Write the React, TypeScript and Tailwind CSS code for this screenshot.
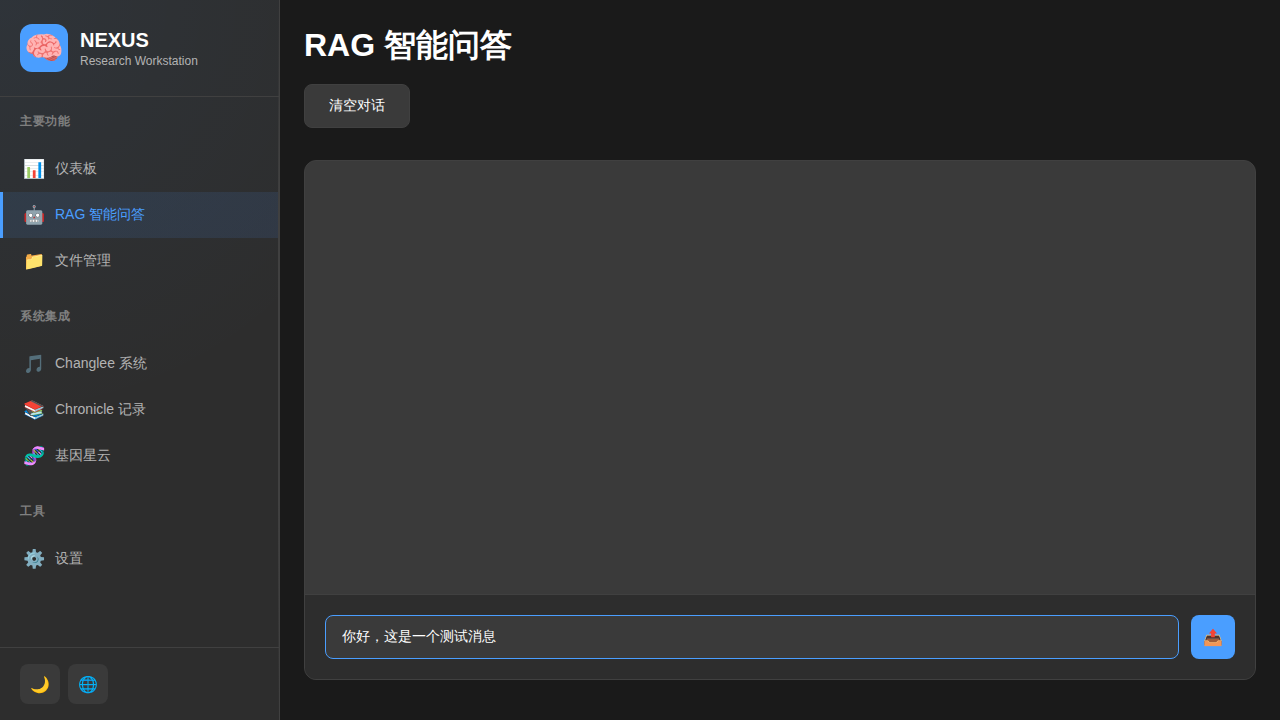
import React from "react";

type Item = { icon: string; label: string; active?: boolean };

const sections: { title: string; items: Item[] }[] = [
  {
    title: "主要功能",
    items: [
      { icon: "📊", label: "仪表板" },
      { icon: "🤖", label: "RAG 智能问答", active: true },
      { icon: "📁", label: "文件管理" },
    ],
  },
  {
    title: "系统集成",
    items: [
      { icon: "🎵", label: "Changlee 系统" },
      { icon: "📚", label: "Chronicle 记录" },
      { icon: "🧬", label: "基因星云" },
    ],
  },
  { title: "工具", items: [{ icon: "⚙️", label: "设置" }] },
];

function NavItem({ icon, label, active }: Item) {
  return (
    <a
      className={
        active
          ? "flex h-[46px] items-center border-l-[3px] border-[#4a9eff] bg-[linear-gradient(135deg,rgba(74,158,255,0.1),rgba(74,130,220,0.13))] px-5 text-[#4a9eff]"
          : "flex h-[46px] items-center border-l-[3px] border-transparent px-5 text-[#b3b3b3]"
      }
    >
      <span className="w-5 shrink-0 text-center text-lg leading-[22px]">{icon}</span>
      <span className="ml-3 pb-0.5 text-sm leading-[22px]">{label}</span>
    </a>
  );
}

function Sidebar() {
  return (
    <aside className="relative flex w-[280px] shrink-0 flex-col border-r border-[#404040] bg-[#2d2d2d] bg-[radial-gradient(circle_at_0%_0%,rgba(74,158,255,0.06),transparent_55%)]">
      <div className="absolute inset-y-0 right-0 w-px bg-[linear-gradient(to_bottom,transparent,#404040_30%,#404040_70%,transparent)]" />
      <div className="flex h-[97px] items-center gap-3 border-b border-[#404040] px-5">
        <div className="flex size-12 items-center justify-center rounded-xl bg-[#4a9eff] text-[32px]">🧠</div>
        <div className="pt-0.5">
          <div className="text-xl leading-6 font-bold text-white">NEXUS</div>
          <div className="text-xs leading-[18px] text-[#b3b3b3]">Research Workstation</div>
        </div>
      </div>
      <nav className="flex-1 pt-[15px]">
        {sections.map((s) => (
          <div key={s.title} className="mb-[23px]">
            <div className="mb-4 px-5 text-xs leading-[18px] font-semibold tracking-[0.5px] text-[#808080]">{s.title}</div>
            <div className="mr-px">
              {s.items.map((i) => (
                <NavItem key={i.label} {...i} />
              ))}
            </div>
          </div>
        ))}
      </nav>
      <div className="flex h-[73px] gap-2 border-t border-[#404040] px-5 pt-4">
        {["🌙", "🌐"].map((i) => (
          <button key={i} className="flex size-10 items-center justify-center rounded-lg bg-[#3a3a3a] pt-0.5 text-base">
            {i}
          </button>
        ))}
      </div>
    </aside>
  );
}

export default function App() {
  return (
    <div className="flex h-screen overflow-hidden bg-[#1a1a1a] font-['Liberation_Sans',sans-serif] text-white">
      <Sidebar />
      <main className="flex min-w-0 flex-1 flex-col items-start p-6">
        <h1 className="h-[44px] text-[32px] leading-[42px] font-bold">RAG 智能问答</h1>
        <button className="mt-4 h-11 rounded-lg border border-[#404040] bg-[#3a3a3a] px-6 pb-0.5 text-sm leading-[22px]">清空对话</button>
        <section className="mt-8 flex h-[520px] w-full flex-col overflow-hidden rounded-xl border border-[#404040] bg-[#3a3a3a]">
          <div className="flex-1" />
          <div className="flex h-[85px] gap-3 border-t border-[#404040] bg-[#2d2d2d] p-5">
            <input
              className="h-11 min-w-0 flex-1 rounded-lg border border-[#4a9eff] bg-[#3a3a3a] px-4 text-sm text-white outline-none"
              defaultValue="你好，这是一个测试消息"
            />
            <button className="flex size-11 items-center justify-center rounded-lg bg-[#4a9eff] pt-0.5 text-base">📤</button>
          </div>
        </section>
      </main>
    </div>
  );
}
